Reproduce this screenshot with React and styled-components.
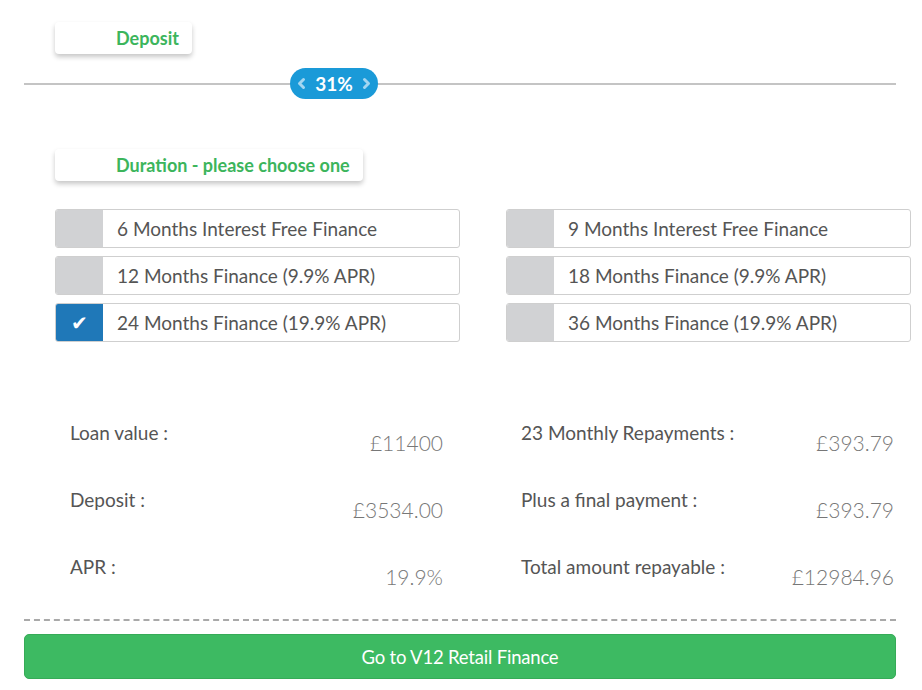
import React from "react";
import styled, { createGlobalStyle } from "styled-components";

const GlobalStyle = createGlobalStyle`
    html, body {
        margin: 0;
        padding: 0;
        background: #fff;
        font-family: Lato, "Open Sans", sans-serif;
    }
`;

const Page = styled.div`
    width: 922px;
    height: 690px;
    overflow: hidden;
    padding: 22px 26px 0 24px;
    box-sizing: border-box;
`;

const LabelBox = styled.div`
    display: inline-flex;
    align-items: center;
    height: 32px;
    margin-left: 31px;
    padding: 0 13px 0 61px;
    border-radius: 4px;
    background: #fff;
    box-shadow: 0 3px 5px rgba(0, 0, 0, 0.22);
    color: #3cb55c;
    font-size: 18px;
    font-weight: 700;
    box-sizing: border-box;
`;

const SliderTrack = styled.div`
    position: relative;
    height: 2px;
    background: #c4c4c4;
    margin: 29px 0 64px;
`;

const Handle = styled.div`
    position: absolute;
    left: 266px;
    top: -15px;
    width: 88px;
    height: 31px;
    border-radius: 16px;
    background: #1a9ad8;
    color: #fff;
    display: flex;
    align-items: center;
    justify-content: center;
    gap: 9px;
    font-size: 19px;
    font-weight: 700;
`;

const Chevron = ({ dir }) => (
    <svg width="9" height="13" viewBox="0 0 9 13">
        <polyline
            points={dir === "left" ? "6.5,2.5 2.5,6.5 6.5,10.5" : "2.5,2.5 6.5,6.5 2.5,10.5"}
            fill="none"
            stroke="#a3d6f1"
            strokeWidth="3"
            strokeLinecap="round"
            strokeLinejoin="round"
        />
    </svg>
);

const Grid = styled.div`
    display: grid;
    grid-template-columns: 405px 405px;
    column-gap: 46px;
    row-gap: 8px;
    margin-left: 31px;
    width: 856px;
`;

const OptionGrid = styled(Grid)`
    margin-top: 28px;
`;

const Option = styled.div`
    display: flex;
    height: 39px;
    border: 1px solid #cfcfcf;
    border-radius: 3px;
    overflow: hidden;
    box-sizing: border-box;
    background: #fff;
`;

const Box = styled.div`
    width: 47px;
    flex: none;
    background: ${(p) => (p.checked ? "#1f78b8" : "#d1d2d4")};
    color: #fff;
    display: flex;
    align-items: center;
    justify-content: center;
    font-family: "DejaVu Sans", sans-serif;
    font-size: 20px;
`;

const OptionText = styled.div`
    display: flex;
    align-items: center;
    padding-left: 14px;
    font-size: 19px;
    color: #555;
`;

const Summary = styled(Grid)`
    margin-top: 69px;
    row-gap: 0;
`;

const SummaryRow = styled.div`
    display: flex;
    justify-content: space-between;
    height: 67px;
    padding: 0 17px 0 15px;
`;

const Label = styled.div`
    font-size: 19px;
    color: #555;
    padding-top: 10px;
`;

const Value = styled.div`
    font-size: 21px;
    font-weight: 300;
    color: #777;
    padding-top: 19px;
`;

const Divider = styled.div`
    margin-top: 7px;
    border-top: 2px dashed #a9a9a9;
`;

const GoButton = styled.button`
    display: block;
    width: 100%;
    height: 45px;
    margin-top: 13px;
    border: 1px solid #36ab57;
    border-radius: 5px;
    background: #3dba62;
    color: #fff;
    font-family: Lato, sans-serif;
    font-size: 18.5px;
    letter-spacing: -0.2px;
    cursor: pointer;
`;

const options = [
    ["6 Months Interest Free Finance", false],
    ["9 Months Interest Free Finance", false],
    ["12 Months Finance (9.9% APR)", false],
    ["18 Months Finance (9.9% APR)", false],
    ["24 Months Finance (19.9% APR)", true],
    ["36 Months Finance (19.9% APR)", false],
];

const summary = [
    ["Loan value :", "£11400"],
    ["23 Monthly Repayments :", "£393.79"],
    ["Deposit :", "£3534.00"],
    ["Plus a final payment :", "£393.79"],
    ["APR :", "19.9%"],
    ["Total amount repayable :", "£12984.96"],
];

export default function App() {
    return (
        <Page>
            <GlobalStyle />
            <LabelBox>Deposit</LabelBox>
            <SliderTrack>
                <Handle>
                    <Chevron dir="left" />
                    31%
                    <Chevron dir="right" />
                </Handle>
            </SliderTrack>
            <LabelBox>Duration - please choose one</LabelBox>
            <OptionGrid>
                {options.map(([text, checked]) => (
                    <Option key={text}>
                        <Box checked={checked}>{checked ? "✔" : ""}</Box>
                        <OptionText>{text}</OptionText>
                    </Option>
                ))}
            </OptionGrid>
            <Summary>
                {summary.map(([label, value]) => (
                    <SummaryRow key={label}>
                        <Label>{label}</Label>
                        <Value>{value}</Value>
                    </SummaryRow>
                ))}
            </Summary>
            <Divider />
            <GoButton>Go to V12 Retail Finance</GoButton>
        </Page>
    );
}
